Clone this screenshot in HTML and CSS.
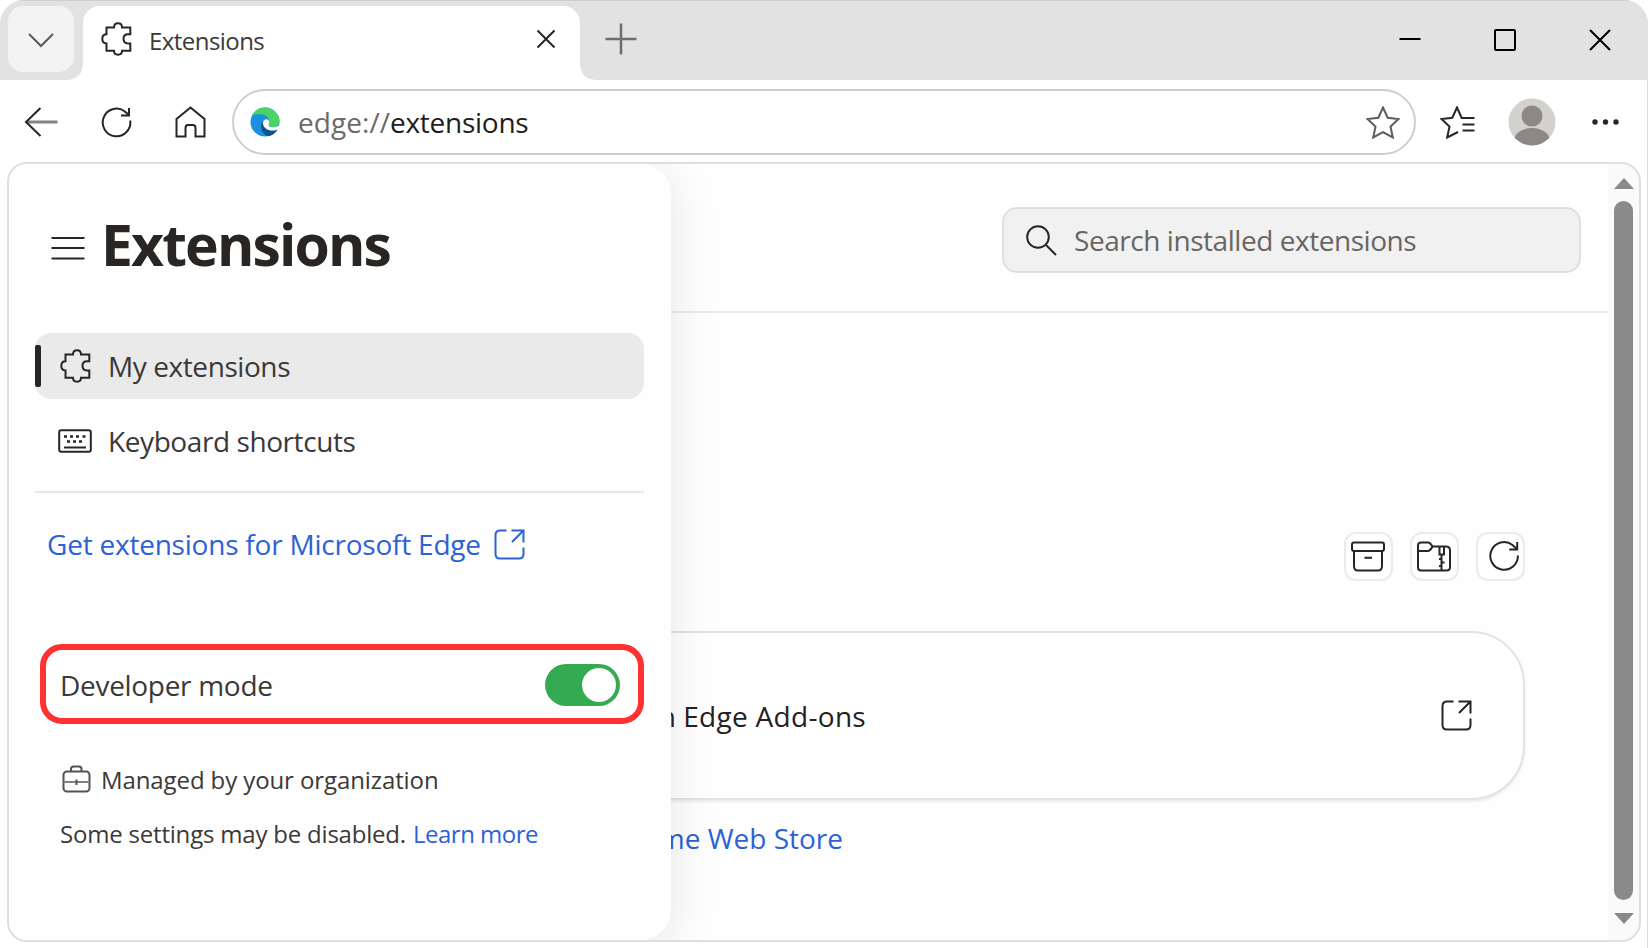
FILE: index.html
```html
<!DOCTYPE html>
<html lang="en">
<head>
  <meta charset="UTF-8">
  <meta name="viewport" content="width=device-width, initial-scale=1.0">
  <title>Extensions</title>
  <link rel="stylesheet" href="styles.css">
</head>
<body>

  <div class="window">
    <div class="tab-bar">
      <button class="tab-menu">
        <svg width="26" height="16" viewBox="0 0 26 16"><path d="M1 2l12 12L25 2"/></svg>
      </button>
      <div class="tab">
        <svg class="tab-icon" width="31" height="34" viewBox="0 0 31 34"><path d="M5.5 5.5H13C13 2.8 14.5 1.3 17 1.3S21 2.8 21 5.5H29.3V12.3H27C24 12.3 22.5 14 22.5 16.8S24 21.4 27 21.4H29.3V28.8H21C21 31.3 19.5 32.7 17 32.7S13 31.3 13 28.8H5.5V21.4C2.8 21.4 1.3 19.8 1.3 17S2.8 12.3 5.5 12.3Z"/></svg>
        <span class="tab-title">Extensions</span>
        <svg class="tab-close" width="20" height="20" viewBox="0 0 20 20"><path d="M1.5 1.5l17 17M18.5 1.5l-17 17"/></svg>
      </div>
      <svg class="new-tab" width="32" height="32" viewBox="0 0 32 32"><path d="M0.5 16h31M16 0.5v31"/></svg>
      <div class="window-buttons">
        <svg width="22" height="22" viewBox="0 0 22 22"><path d="M0.5 10h21"/></svg>
        <svg width="22" height="22" viewBox="0 0 22 22"><rect x="1" y="1" width="20" height="20" rx="1"/></svg>
        <svg width="22" height="22" viewBox="0 0 22 22"><path d="M1 1l20 20M21 1L1 21"/></svg>
      </div>
    </div>

    <div class="toolbar">
      <svg class="back" width="34" height="30" viewBox="0 0 34 30"><path class="shaft" d="M2 15h31.5"/><path d="M16.5 1L2 15l14.5 14"/></svg>
      <svg class="reload" width="31" height="31" viewBox="0 0 31 31"><path d="M29.2 13.5A13.8 13.8 0 1 1 23.500 4.200L27.500 7.500M28 1v7.500h-8"/></svg>
      <svg class="home" width="31" height="32" viewBox="0 0 31 32"><path d="M1.5 13L15.5 1.5 29.5 13V30.5H20.5V22C20.5 19.8 19.5 19 18 19H13C11.5 19 10.5 19.8 10.5 22V30.5H1.5Z"/></svg>
      <div class="address">
        <svg class="logo" width="30" height="30" viewBox="0 0 30 30">
          <circle cx="15" cy="15" r="14.5" fill="#1b8fe0"/>
          <path d="M2.5 8C5 3 9.5 .5 15 .5 23.5 .5 29.5 7 29.5 14 29.5 18 26.5 20 23 20 20.5 20 18.5 19.3 18.5 18 18.5 17 19.5 16.5 19.5 14.5 19.5 10.5 15.5 7.5 10.5 7.3 7.5 7.2 4.5 7.5 2.5 8Z" fill="#4bd365"/>
          <path d="M13 14C9.5 18 11 25 16 28.5 19.5 30 25 27.5 27.5 22.5 21 25 14.5 22 13 14Z" fill="#0f5590"/>
          <path d="M12.8 16C13.5 12.5 16 11.500 18 12.7 19.8 13.8 19.5 16 18.6 17.2 18 19.5 21 20.8 26.500 19.8L30 18V21L27 22.700C20.5 25 13.5 22.5 12.8 16Z" fill="#fff"/>
        </svg>
        <span class="url"><span class="scheme">edge://</span>extensions</span>
        <svg class="star" width="34" height="33" viewBox="0 0 34 33"><path d="M17 1.5L21.7 11.7 32.5 13 24.5 20.5 26.8 31.5 17 26.2 7.2 31.5 9.5 20.5 1.5 13 12.3 11.7Z"/></svg>
      </div>
      <svg class="favorites" width="36" height="33" viewBox="0 0 36 33"><path d="M22.5 12H21.7L17 1.5 12.3 11.7 1.5 13 9.5 20.5 7.2 31.5 18 26M22 12H34.5M22.5 18.5H34.5M22.5 24.5H34.5"/></svg>
      <svg class="avatar" width="48" height="48" viewBox="0 0 48 48">
        <clipPath id="round"><circle cx="24" cy="24" r="23.5"/></clipPath>
        <g clip-path="url(#round)">
          <rect width="48" height="48" fill="#d3d1ce"/>
          <circle cx="24" cy="18" r="10.5" fill="#8b8886"/>
          <ellipse cx="24" cy="43" rx="18" ry="13" fill="#8b8886"/>
        </g>
      </svg>
      <svg class="more" width="28" height="6" viewBox="0 0 28 6"><circle cx="3" cy="3" r="2.7"/><circle cx="13.5" cy="3" r="2.7"/><circle cx="24" cy="3" r="2.7"/></svg>
    </div>

    <div class="page">
      <main class="main">
        <div class="main-header">
          <div class="search">
            <svg width="31" height="31" viewBox="0 0 31 31"><circle cx="12" cy="12" r="10.8"/><path d="M20 20l10 10"/></svg>
            <span>Search installed extensions</span>
          </div>
        </div>

        <div class="actions">
          <button class="action-btn">
            <svg width="34" height="31" viewBox="0 0 34 31"><rect x="1" y="1.5" width="32" height="8.5" rx="2"/><path d="M3 10V25C3 28 4.5 29.5 7 29.5H27C29.5 29.5 31 28 31 25V10M13.5 16.7h7.5"/></svg>
          </button>
          <button class="action-btn">
            <svg width="34" height="31" viewBox="0 0 34 31"><path d="M4 1.5H11C13 1.5 14 3 15.5 5.5H29C31.5 5.5 33 7 33 9.5V26C33 28.5 31.5 29.5 29.5 29.5H4C2 29.5 1 28.5 1 26.5V4.5C1 2.5 2 1.5 4 1.5ZM1 10H11C13 10 14 8 15.5 5.5M22.5 5.5V13.5H27V5.5M24.5 14V29.5M22 18H24.5M24.5 21.5H27.5M22 25H24.5"/></svg>
          </button>
          <button class="action-btn shifted">
            <svg width="31" height="31" viewBox="0 0 31 31"><path d="M28.9 14.5A13.8 13.8 0 1 1 23.5 4L28 8M28.2 1v7.500h-8"/></svg>
          </button>
        </div>

        <div class="card">
          <span class="card-text">Find extensions on <span class="card-name">Edge Add-ons</span></span>
          <svg width="31" height="31" viewBox="0 0 31 31"><path d="M12.5 1.5H6C3 1.5 1.5 3 1.5 6V25C1.5 28 3 29.5 6 29.5H25C28 29.5 29.5 28 29.5 25V18.5M17.5 1.5H29.5V13.5M29 2L18 13"/></svg>
        </div>

        <p class="store"><a href="#">Chrome Web Store</a></p>
      </main>

      <div class="scrollbar">
        <svg width="20" height="11" viewBox="0 0 20 11"><path d="M10 0l10 11H0z"/></svg>
        <div class="thumb"></div>
        <svg width="20" height="11" viewBox="0 0 20 11"><path d="M10 11L0 0h20z"/></svg>
      </div>

      <aside class="sidebar">
        <div class="heading">
          <svg width="34" height="24" viewBox="0 0 34 24"><path d="M0.5 2h33M0.5 12h33M0.5 22.5h33"/></svg>
          <h1>Extensions</h1>
        </div>

        <nav>
          <a class="nav-item active" href="#">
            <svg width="31" height="34" viewBox="0 0 31 34"><path d="M5.5 5.5H13C13 2.8 14.5 1.3 17 1.3S21 2.8 21 5.5H29.3V12.3H27C24 12.3 22.5 14 22.5 16.8S24 21.4 27 21.4H29.3V28.8H21C21 31.3 19.5 32.7 17 32.7S13 31.3 13 28.8H5.5V21.4C2.8 21.4 1.3 19.8 1.3 17S2.8 12.3 5.5 12.3Z"/></svg>
            <span>My extensions</span>
          </a>
          <a class="nav-item" href="#">
            <svg width="34" height="24" viewBox="0 0 34 24"><rect x="1.2" y="1.2" width="31.6" height="21.6" rx="2"/><path d="M6 18.5H28"/><path class="keys" d="M6 7.5h3M12 7.5h3M18 7.5h3M24.5 7.5h3M9 12.5h3M15 12.5h3M21 12.5h3"/></svg>
            <span>Keyboard shortcuts</span>
          </a>
        </nav>

        <a class="get-link" href="#">
          <span>Get extensions for Microsoft Edge</span>
          <svg width="31" height="31" viewBox="0 0 31 31"><path d="M12.5 1.5H6C3 1.5 1.5 3 1.5 6V25C1.5 28 3 29.5 6 29.5H25C28 29.5 29.5 28 29.5 25V18.5M17.5 1.5H29.5V13.5M29 2L18 13"/></svg>
        </a>

        <div class="developer">
          <span>Developer mode</span>
          <div class="toggle"></div>
        </div>

        <p class="managed">
          <svg width="29" height="28" viewBox="0 0 29 28"><path d="M9 6.500V4C9 2.500 10 1.500 11.500 1.500H17C18.500 1.500 19.500 2.500 19.500 4V6.500"/><rect x="1.500" y="6.500" width="26" height="20" rx="3.500"/><path class="band" d="M1.500 17H27.500"/><path d="M14.500 14.500V20"/></svg>
          <span>Managed by your organization</span>
        </p>
        <p class="note">Some settings may be disabled. <a href="#">Learn more</a></p>
      </aside>
    </div>
  </div>

</body>
</html>
```
FILE: styles.css
```css
* {
  box-sizing: border-box;
}
body {
  font-family: 'Open Sans', 'Noto Sans', sans-serif;
  font-size: 28px;
  margin: 0;
  background-color: #fff;
  color: #3b3937;
}
a {
  color: #2c62d6;
  text-decoration: none;
}
button {
  padding: 0;
  border: none;
  font: inherit;
}
p {
  margin: 0;
}
span {
  white-space: nowrap;
}
svg {
  display: block;
  flex-shrink: 0;
  fill: none;
  stroke: #292522;
  stroke-width: 2;
}

.window {
  display: flex;
  flex-direction: column;
  height: 948px;
  padding-bottom: 6px;
  overflow: hidden;
  border-radius: 24px 24px 0 0;
  box-shadow: inset -1px 0 0 #dcdcdc;
}

/* tabs */
.tab-bar {
  display: flex;
  height: 80px;
  padding: 6px 37px 0 8px;
  background-color: #e2e2e2;
  box-shadow: inset 0 1px 0 #cfcfcf;
}
.tab-menu {
  display: flex;
  align-items: center;
  justify-content: center;
  width: 66px;
  height: 66px;
  margin-right: 9px;
  padding-top: 2px;
  border-radius: 15px;
  background-color: #f3f3f3;
}
.tab-menu svg {
  stroke: #5c5a58;
}
.tab {
  position: relative;
  display: flex;
  align-items: center;
  width: 497px;
  height: 74px;
  padding: 0 24px 8px 18px;
  border-radius: 17px 17px 0 0;
  background-color: #fff;
}
.tab::before,
.tab::after {
  content: '';
  position: absolute;
  bottom: 0;
  width: 14px;
  height: 14px;
}
.tab::before {
  left: -14px;
  background: radial-gradient(circle at 0 0, #e2e2e2 13px, #fff 14px);
}
.tab::after {
  right: -14px;
  background: radial-gradient(circle at 100% 0, #e2e2e2 13px, #fff 14px);
}
.tab-title {
  flex: 1;
  margin-left: 17px;
  padding-top: 3px;
  font-size: 24px;
  letter-spacing: -0.55px;
}
.new-tab {
  margin: 17px 0 0 25px;
  stroke: #706e6c;
  stroke-width: 2.5;
}
.window-buttons {
  display: flex;
  gap: 73px;
  margin: 23px 0 0 auto;
}
.window-buttons svg {
  stroke: #000;
}

/* toolbar */
.toolbar {
  display: flex;
  align-items: center;
  height: 82px;
  padding: 2px 28px 0 24px;
}
.back .shaft {
  stroke: #86827f;
  stroke-width: 3;
}
.reload {
  margin-left: 43px;
}
.home {
  margin-left: 43px;
}
.address {
  display: flex;
  align-items: center;
  width: 1184px;
  height: 66px;
  margin-left: 26px;
  padding: 0 14px 0 16px;
  border: 2px solid #cecece;
  border-radius: 33px;
}
.logo {
  stroke: none;
}
.url {
  flex: 1;
  margin-left: 18px;
  color: #1f1d1b;
  letter-spacing: -0.27px;
}
.scheme {
  color: #6d6a68;
  letter-spacing: 0.05px;
}
.star {
  stroke: #615c5a;
}
.favorites {
  margin-left: 24px;
}
.avatar {
  margin-left: 32px;
  stroke: none;
}
.more {
  margin-left: 36px;
  fill: #292522;
  stroke: none;
}

/* page */
.page {
  position: relative;
  display: flex;
  flex: 1;
  margin: 0 7px;
  overflow: hidden;
  border: 2px solid #dedede;
  border-radius: 20px;
  background-color: #fefefe;
}
.main {
  flex: 1;
}
.main-header {
  display: flex;
  justify-content: flex-end;
  height: 149px;
  padding: 43px 27px 0 0;
  border-bottom: 2px solid #ebebeb;
}
.search {
  display: flex;
  align-items: center;
  gap: 17px;
  width: 579px;
  height: 66px;
  padding-left: 22px;
  border: 2px solid #dfdfdf;
  border-radius: 15px;
  background-color: #f1f1f1;
  color: #686562;
  letter-spacing: -0.45px;
}
.actions {
  display: flex;
  justify-content: flex-end;
  gap: 17px;
  margin: 219px 83px 0 0;
}
.action-btn {
  display: flex;
  align-items: center;
  justify-content: center;
  width: 49px;
  height: 49px;
  padding-right: 1px;
  border: 2px solid #ebebeb;
  border-radius: 12px;
  background-color: #fff;
}
.shifted {
  padding-left: 9px;
}
.card {
  display: flex;
  align-items: center;
  justify-content: space-between;
  height: 169px;
  margin: 50px 83px 0 140px;
  padding-right: 51px;
  border: 2px solid #e3e3e3;
  border-radius: 54px;
  box-shadow: 0 2px 3px rgba(0, 0, 0, 0.07);
  background-color: #fff;
  color: #24211f;
}
.card-text {
  width: 715px;
  text-align: right;
}
.card-name {
  letter-spacing: 0.3px;
}
.store {
  width: 834px;
  padding-top: 19px;
  text-align: right;
}

.scrollbar {
  display: flex;
  flex-direction: column;
  align-items: center;
  width: 31px;
  padding: 14px 0 16px;
  background-color: #fafafa;
}
.scrollbar svg {
  fill: #8a8a8a;
  stroke: none;
}
.thumb {
  flex: 1;
  width: 19px;
  margin: 12px 0 13px;
  border-radius: 10px;
  background-color: #8a8a8a;
}

/* drawer over the page */
.sidebar {
  position: absolute;
  top: 0;
  bottom: 0;
  left: 0;
  width: 662px;
  padding: 42px 27px 0 26px;
  border-radius: 0 30px 30px 0;
  box-shadow: 0 8px 50px rgba(0, 0, 0, 0.1);
  background-color: #fefefe;
}
.heading {
  display: flex;
  align-items: center;
  gap: 16px;
  height: 76px;
  margin-bottom: 51px;
  padding-left: 16px;
}
.heading svg {
  margin-top: 7px;
}
h1 {
  margin: 0;
  color: #292522;
  font-size: 57px;
  letter-spacing: -1.85px;
}
nav {
  padding-bottom: 17px;
  border-bottom: 2px solid #e8e8e8;
}
.nav-item {
  position: relative;
  display: flex;
  align-items: center;
  gap: 17px;
  height: 66px;
  margin-bottom: 9px;
  padding-left: 25px;
  border-radius: 16px;
  color: #3b3937;
  letter-spacing: -0.42px;
}
.nav-item:last-child {
  gap: 16px;
  margin-bottom: 0;
  padding-left: 23px;
}
.active {
  background-color: #eaeaea;
}
.active::before {
  content: '';
  position: absolute;
  top: 12px;
  left: 0;
  width: 6px;
  height: 42px;
  border-radius: 2px;
  background-color: #292522;
}
.keys {
  stroke-width: 2.5;
}
.get-link {
  display: flex;
  align-items: center;
  gap: 13px;
  height: 66px;
  margin-top: 18px;
  padding-left: 12px;
  letter-spacing: -0.22px;
}
.get-link svg {
  stroke: #2c62d6;
}
.developer {
  display: flex;
  align-items: center;
  justify-content: space-between;
  height: 80px;
  margin: 67px 0 39px 5px;
  padding: 2px 18px 0 14px;
  border: 6px solid #ff3131;
  border-radius: 22px;
  letter-spacing: -0.3px;
}
.toggle {
  width: 75px;
  height: 42px;
  padding: 4px;
  border-radius: 21px;
  background-color: #34ab53;
}
.toggle::after {
  content: '';
  display: block;
  width: 34px;
  height: 34px;
  margin-left: auto;
  border-radius: 50%;
  background-color: #fff;
}
.managed {
  display: flex;
  align-items: center;
  gap: 10px;
  height: 32px;
  padding-left: 27px;
  font-size: 24px;
  letter-spacing: -0.1px;
}
.managed svg {
  stroke: #55524f;
}
.managed .band {
  stroke: #84817e;
}
.note {
  margin-top: 23px;
  padding-left: 25px;
  font-size: 24px;
  line-height: 32px;
  letter-spacing: -0.2px;
  white-space: nowrap;
}
.note a {
  margin-left: 1px;
  letter-spacing: -0.5px;
}
```
